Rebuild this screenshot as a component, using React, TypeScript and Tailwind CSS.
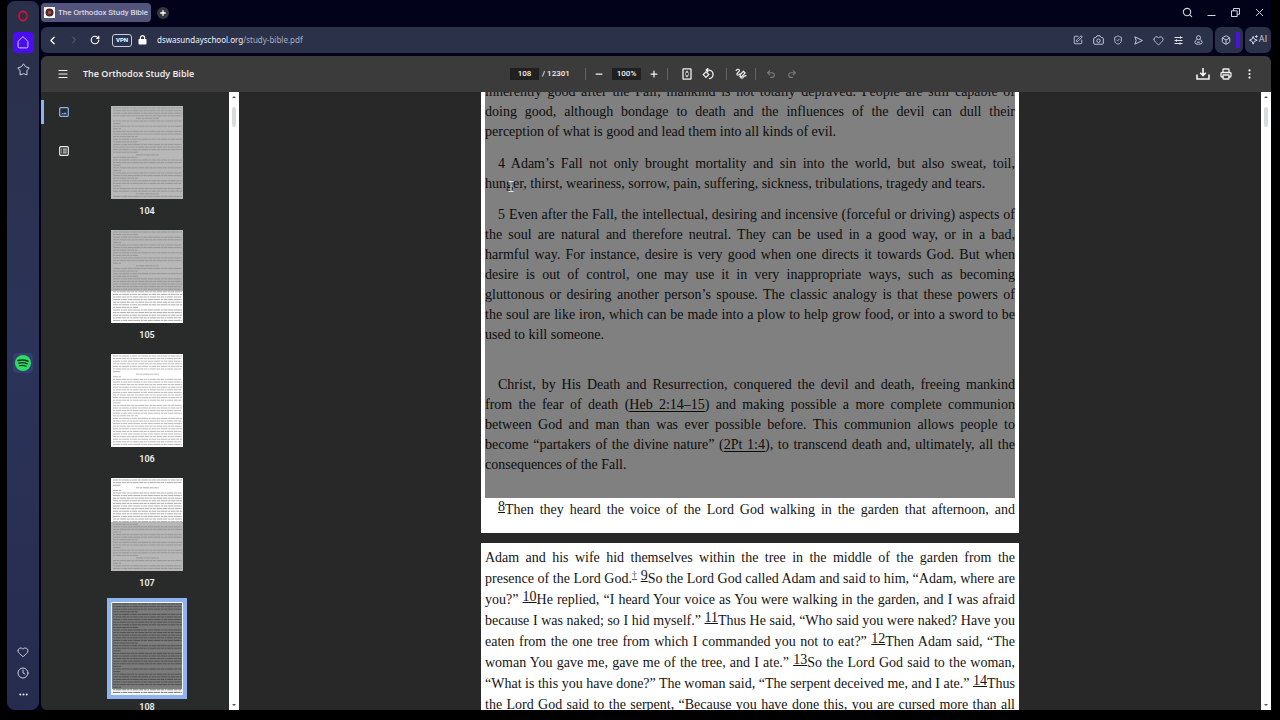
import React from 'react';
import {
  ChevronLeft, ChevronRight, RotateCw, SquarePen, ShieldCheck, Heart,
  Box, Search, X, Menu, Minus, Plus, Undo2, Redo2, Printer, Clock,
} from 'lucide-react';

type Kids = { children: React.ReactNode };

const iconBtn = 'flex h-5 shrink-0 items-center justify-center';

function IconButton({ label, className = 'w-5', children }: Kids & { label: string; className?: string }) {
  return (
    <button type="button" aria-label={label} className={`${iconBtn} ${className}`}>
      {children}
    </button>
  );
}

/* ---------- drawings ---------- */

function OperaLogo() {
  return (
    <svg width="12" height="12" viewBox="0 0 12 12" fill="none">
      <ellipse cx="6" cy="6" rx="4" ry="4.6" stroke="#d81b3c" strokeWidth="1.6" />
      <path d="M3.2 2.6A5.2 5.2 0 0 0 3.2 9.4M8.8 2.6A5.2 5.2 0 0 1 8.8 9.4" stroke="#b5122f" strokeWidth="1.8" />
    </svg>
  );
}

function HomeIcon() {
  return (
    <svg width="12" height="13" viewBox="0 0 12 13" fill="none" stroke="#d9d2ff" strokeWidth="1">
      <path d="M6 .9Q6.5.9 7 1.4L10.4 4.9Q10.9 5.4 10.9 6.1V10.6Q10.9 11.9 9.6 11.9H2.4Q1.1 11.9 1.1 10.6V6.1Q1.1 5.4 1.6 4.9L5 1.4Q5.5.9 6 .9Z" />
    </svg>
  );
}

function StarIcon() {
  return (
    <svg width="13" height="13" viewBox="0 0 13 13" fill="none" stroke="#c9cde0" strokeWidth="1" strokeLinejoin="round">
      <path d="M6.5.8 8.6 3.8 12.2 4.9 9.9 7.8 10 11.9 6.5 10.7 3 11.9 3.1 7.8.8 4.9 4.4 3.8Z" />
    </svg>
  );
}

function SpotifyIcon() {
  return (
    <svg width="16" height="16" viewBox="0 0 16 16" fill="none" strokeLinecap="round">
      <circle cx="8" cy="8" r="8" fill="#2fdc68" />
      <path d="M3 5.5Q8.2 4 13 6.3" stroke="#12301d" strokeWidth="1.5" />
      <path d="M3.7 8.2Q8.2 6.9 12.2 8.9" stroke="#12301d" strokeWidth="1.3" />
      <path d="M4.4 10.7Q8 9.8 11.2 11.3" stroke="#12301d" strokeWidth="1.1" />
    </svg>
  );
}

function RestoreIcon() {
  return (
    <svg width="9" height="9" viewBox="0 0 9 9" fill="none" stroke="#d4d4dc">
      <path d="M.5 2.8H6.2V8.5H.5ZM2.5 2.8V.5H8.5V6.3H6.2" />
    </svg>
  );
}

function LockIcon() {
  return (
    <svg width="9" height="10" viewBox="0 0 9 10" fill="none">
      <rect x=".5" y="4" width="8" height="5.6" rx=".8" fill="#fff" />
      <path d="M2.4 4.4V2.8A2.1 2.1 0 0 1 6.6 2.8V4.4" stroke="#fff" strokeWidth="1.2" />
    </svg>
  );
}

function SnapshotIcon() {
  return (
    <svg width="11" height="10" viewBox="0 0 11 10" fill="none" stroke="#c3c8d9">
      <path d="M1.8 2.6H2.8L4 .8H7L8.2 2.6H9.2Q10.3 2.6 10.3 3.7V8.1Q10.3 9.2 9.2 9.2H1.8Q.7 9.2.7 8.1V3.7Q.7 2.6 1.8 2.6Z" />
      <circle cx="5.5" cy="5.7" r="1.7" />
    </svg>
  );
}

function FlowIcon() {
  return (
    <svg width="9" height="9" viewBox="0 0 9 9" fill="none" stroke="#c3c8d9" strokeLinejoin="round">
      <path d="M.8.8 8.4 4.5.8 8.2 2.2 4.5Z" />
    </svg>
  );
}

function TunerIcon() {
  return (
    <svg width="9" height="9" viewBox="0 0 9 9" fill="none" stroke="#dfe2ec">
      <path d="M.5 1.5H8.5M.5 4.5H8.5M.5 7.5H8.5M6.5.3V2.7M2.5 3.3V5.7M6 6.3V8.7" />
    </svg>
  );
}

function ProfileIcon() {
  return (
    <svg width="9" height="10" viewBox="0 0 9 10" fill="none" stroke="#c3c8d9">
      <circle cx="4.5" cy="2.7" r="2" />
      <path d="M2.8 4.6Q.9 5.6.9 7.6 1 9.3 4.5 9.3 8 9.3 8.1 7.6 8.1 5.6 6.2 4.6" />
      <path d="M3 7.2H6" />
    </svg>
  );
}

function SparkleIcon() {
  return (
    <svg width="9" height="10" viewBox="0 0 9 10" fill="none" stroke="#d4d8e6">
      <path d="M4.2 1.4 5.3 4 8.2 5.2 5.3 6.4 4.2 9.2 3.1 6.4.5 5.2 3.1 4Z" strokeLinejoin="round" />
      <path d="M7.4.2V2.8M6.1 1.5H8.7" />
    </svg>
  );
}

function FitPageIcon() {
  return (
    <svg width="10" height="12" viewBox="0 0 10 12" fill="none" stroke="#f1f1f1">
      <rect x="1" y=".8" width="8" height="10.4" rx=".6" strokeWidth="1.3" />
      <path d="M3.6 4.4 5 2.8 6.4 4.4ZM3.6 7.6 5 9.2 6.4 7.6Z" fill="#f1f1f1" strokeWidth=".4" />
      <path d="M3 6H4M6 6H7" />
    </svg>
  );
}

function RotateIcon() {
  return (
    <svg width="12" height="12" viewBox="0 0 12 12" fill="none" stroke="#f1f1f1" strokeWidth="1.3">
      <path d="M1.2 6.6 4 3.9 6.8 6.6 4 9.4Z" />
      <path d="M4.6 2.1H6.6A4.3 4.3 0 0 1 6.9 10.7M6.2.2 4.2 2.1 6.2 4" />
    </svg>
  );
}

function DrawIcon() {
  return (
    <svg width="12" height="12" viewBox="0 0 12 12" fill="none" stroke="#f1f1f1" strokeWidth="1.2" strokeLinecap="round" strokeLinejoin="round">
      <path d="M1.2 2.4C2.2.8 4.6.9 4.4 2.6 4.2 4 1.6 4.8 1.9 6.4 2.2 7.6 3.8 7 5.2 5.6" />
      <path d="M5 8.6 5.3 6.6 8.4 3.2 10.2 4.9 7 8.3Z" />
      <path d="M5.4 8.6C5.4 10.6 7.6 10.6 8.2 9.2 8.6 8.2 9.6 7.8 11 7.6" />
    </svg>
  );
}

function DownloadIcon() {
  return (
    <svg width="14" height="12" viewBox="0 0 14 12" fill="none" stroke="#f5f5f5" strokeWidth="1.6">
      <path d="M1 6.5V11H13V6.5M7 0V7.4M4.2 4.8 7 7.6 9.8 4.8" />
    </svg>
  );
}

function ThumbnailsIcon() {
  return (
    <svg width="10" height="10" viewBox="0 0 10 10" fill="none" stroke="#8ab4f8" strokeWidth="1.2">
      <rect x=".7" y=".7" width="8.6" height="8.6" rx="1" />
      <path d="M2.2 7.3 3.6 5.7 4.7 6.8 6.2 5.2 7.8 7.3Z" fill="#8ab4f8" stroke="none" />
    </svg>
  );
}

function OutlineIcon() {
  return (
    <svg width="10" height="10" viewBox="0 0 10 10" fill="none" stroke="#ececec" strokeWidth="1.2">
      <rect x=".7" y=".7" width="8.6" height="8.6" rx="1" />
      <path d="M2.2 3.1H3.2M4 3.1H7.8M2.2 5H3.2M4 5H7.8M2.2 6.9H3.2M4 6.9H7.8" strokeWidth="1" />
    </svg>
  );
}

/* ---------- browser chrome ---------- */

function SideRail() {
  return (
    <nav aria-label="Browser sidebar" className="mt-px flex w-8 shrink-0 flex-col items-center rounded-lg bg-linear-to-b from-[#2a3049] via-[#2b3358] to-[#252c4e] pt-1">
      <IconButton label="Opera menu" className="mt-px w-5"><OperaLogo /></IconButton>
      <button type="button" aria-label="Home" className="mt-[6px] flex size-[21px] items-center justify-center rounded-sm bg-[#4a0cf0]">
        <HomeIcon />
      </button>
      <IconButton label="Bookmarks" className="mt-[6px] w-5"><StarIcon /></IconButton>
      <div className="my-auto pt-1">
        <button type="button" aria-label="Spotify" className="flex size-5 items-center justify-center rounded-sm bg-[#333f6e]">
          <SpotifyIcon />
        </button>
      </div>
      <div className="flex flex-col items-center gap-px pb-[6px]">
        <IconButton label="Favourites"><Heart size={12} strokeWidth={2} className="text-[#c9cde0]" /></IconButton>
        <IconButton label="History"><Clock size={12} strokeWidth={2} className="text-[#c9cde0]" /></IconButton>
        <IconButton label="More">
          <svg width="9" height="3" viewBox="0 0 9 3" fill="#e6e8f2">
            <circle cx="1.3" cy="1.5" r="1" /><circle cx="4.5" cy="1.5" r="1" /><circle cx="7.7" cy="1.5" r="1" />
          </svg>
        </IconButton>
      </div>
    </nav>
  );
}

function TabStrip() {
  return (
    <header className="flex h-[27px] items-center pb-[2px]">
      <div className="flex h-[19px] items-center gap-[3px] rounded-sm bg-[#52547c] px-[3px]">
        <svg width="11" height="11" viewBox="0 0 11 11">
          <rect width="11" height="11" fill="#fff" />
          <circle cx="5.5" cy="5.5" r="4" fill="#4a2a30" />
          <circle cx="5.5" cy="5.5" r="1.8" fill="#b0483c" />
        </svg>
        <span className="text-[8px] whitespace-nowrap text-[#f0f0f6]">The Orthodox Study Bible</span>
      </div>
      <button type="button" aria-label="New tab" className="ml-[6px] flex size-3 items-center justify-center rounded-full bg-[#36363f]">
        <Plus size={8} strokeWidth={4} className="text-white" />
      </button>
      <div className="ml-auto flex text-[#d4d4dc]">
        <IconButton label="Search tabs" className="w-6"><Search size={11} strokeWidth={2.4} /></IconButton>
        <IconButton label="Minimize" className="w-6">
          <svg width="9" height="9" viewBox="0 0 9 9"><path d="M.5 7.5H8.5" stroke="#d4d4dc" /></svg>
        </IconButton>
        <IconButton label="Restore" className="w-6"><RestoreIcon /></IconButton>
        <IconButton label="Close" className="w-6"><X size={13} strokeWidth={1.8} /></IconButton>
      </div>
    </header>
  );
}

function AddressBar() {
  return (
    <div className="flex h-[26px] gap-[2px] text-[#c3c8d9]">
      <div className="flex min-w-0 flex-1 items-center rounded-md bg-[#2a3148] pr-[5px] pl-px">
        <IconButton label="Back" className="w-[21px]"><ChevronLeft size={13} strokeWidth={2.4} className="text-white" /></IconButton>
        <IconButton label="Forward" className="w-[21px]"><ChevronRight size={12} strokeWidth={2} className="text-[#666c84]" /></IconButton>
        <IconButton label="Reload" className="w-[22px]"><RotateCw size={10} strokeWidth={2.8} className="text-white" /></IconButton>
        <button type="button" className="ml-[6px] flex h-[13px] w-5 items-center justify-center rounded-[3px] border border-[#c6cadb] text-[6px] leading-none font-bold text-white">VPN</button>
        <IconButton label="Site information"><LockIcon /></IconButton>
        <a href="#study-bible" className="ml-[5px] font-['Noto_Sans',sans-serif] text-[8px] whitespace-nowrap text-[#a9afc4]">
          <span className="text-[#f0f2f8]">dswasundayschool.org</span>/study-bible.pdf
        </a>
        <div className="ml-auto flex">
          <IconButton label="Edit page"><SquarePen size={10} strokeWidth={2.2} /></IconButton>
          <IconButton label="Snapshot"><SnapshotIcon /></IconButton>
          <IconButton label="Blocker"><ShieldCheck size={10} strokeWidth={2.2} /></IconButton>
          <IconButton label="Send"><FlowIcon /></IconButton>
          <IconButton label="Add to favourites"><Heart size={11} strokeWidth={2} /></IconButton>
          <IconButton label="Easy setup"><TunerIcon /></IconButton>
          <IconButton label="Profile"><ProfileIcon /></IconButton>
        </div>
      </div>
      <div className="flex w-7 items-center justify-between rounded-md bg-[#2a3148] pr-[3px] pl-px">
        <IconButton label="Extensions"><Box size={10} strokeWidth={2.4} /></IconButton>
        <span className="h-4 w-1 rounded-[1px] bg-[#4a12e0]" />
      </div>
      <button type="button" className="flex w-[26px] items-center justify-center gap-px rounded-md bg-[#2a3148] text-[9px]">
        <SparkleIcon />AI
      </button>
    </div>
  );
}

/* ---------- PDF viewer ---------- */

function Divider({ className = '' }: { className?: string }) {
  return <span className={`h-3 w-px bg-[#636363] ${className}`} />;
}

function PdfToolbar() {
  return (
    <div className="mt-[3px] grid h-9 shrink-0 grid-cols-[1fr_auto_1fr] items-center rounded-t-md bg-[#3b3b3b] text-[#f1f1f1]">
      <div className="flex items-center gap-[10px] pl-3">
        <IconButton label="Menu"><Menu size={12} strokeWidth={2.4} /></IconButton>
        <h1 className="font-['Open_Sans',sans-serif] text-[9px] font-semibold whitespace-nowrap">The Orthodox Study Bible</h1>
      </div>
      <div className="flex items-center text-[8px] font-medium">
        <input aria-label="Page number" defaultValue="108" className="h-3 w-[29px] bg-[#202020] text-center" />
        <span className="ml-[3px] w-[30px] whitespace-nowrap">/ 12301</span>
        <Divider className="ml-[13px]" />
        <IconButton label="Zoom out" className="w-[26px]"><Minus size={10} strokeWidth={3} /></IconButton>
        <input aria-label="Zoom" defaultValue="100%" className="h-3 w-[29px] bg-[#202020] text-center" />
        <IconButton label="Zoom in" className="w-[26px]"><Plus size={10} strokeWidth={3} /></IconButton>
        <Divider />
        <IconButton label="Fit to page" className="ml-2 w-[21px]"><FitPageIcon /></IconButton>
        <IconButton label="Rotate" className="w-[21px]"><RotateIcon /></IconButton>
        <Divider className="ml-2" />
        <IconButton label="Draw" className="w-7"><DrawIcon /></IconButton>
        <Divider />
        <IconButton label="Undo" className="ml-1 w-[21px]"><Undo2 size={10} strokeWidth={2.6} className="text-[#7b7b7b]" /></IconButton>
        <IconButton label="Redo" className="w-[21px]"><Redo2 size={10} strokeWidth={2.6} className="text-[#7b7b7b]" /></IconButton>
      </div>
      <div className="flex justify-end gap-[3px] pr-3">
        <IconButton label="Download"><DownloadIcon /></IconButton>
        <IconButton label="Print"><Printer size={12} strokeWidth={2.6} /></IconButton>
        <IconButton label="More actions">
          <svg width="3" height="10" viewBox="0 0 3 10" fill="#f1f1f1">
            <circle cx="1.5" cy="1.4" r="1.1" /><circle cx="1.5" cy="5" r="1.1" /><circle cx="1.5" cy="8.6" r="1.1" />
          </svg>
        </IconButton>
      </div>
    </div>
  );
}

type Thumb = { page: number; top: string; bottom: string; split: number; ink: string; breaks: number[]; heads: number[]; current?: boolean };

const thumbs: Thumb[] = [
  { page: 104, top: '#b8b8b8', bottom: '#b8b8b8', split: 93, ink: '#868686', breaks: [17, 24, 31, 37, 45, 52, 58, 65, 73, 80], heads: [13, 48, 87] },
  { page: 105, top: '#b8b8b8', bottom: '#ffffff', split: 61, ink: '#868686', breaks: [5, 12, 19, 26, 33, 41, 47, 78], heads: [37] },
  { page: 106, top: '#ffffff', bottom: '#ffffff', split: 93, ink: '#9a9a9a', breaks: [18, 24, 50, 63], heads: [21] },
  { page: 107, top: '#ffffff', bottom: '#b8b8b8', split: 44, ink: '#868686', breaks: [6, 13, 47, 55, 62, 69, 77, 84], heads: [9, 45, 81] },
  { page: 108, top: '#7c7c7c', bottom: '#ffffff', split: 87, ink: '#3c3c3c', breaks: [11, 25, 41, 49, 65, 70, 85], heads: [], current: true },
];

const dashes = ['5 .6 3 .5 7 .6 2 .5', '2 .5 6 .6 4 .5 3 .6', '7 .6 2 .5 4 .6 5 .5', '3 .5 3 .6 6 .5 4 .6'];

function PageThumb({ thumb }: { thumb: Thumb }) {
  const rows: React.ReactNode[] = [];
  for (let i = 0; i * 2.6 + 2 < 91; i++) {
    const y = i * 2.6 + 2;
    const dash = dashes[i % 4];
    if (thumb.breaks.some((b) => Math.abs(b - y) <= 1.3)) {
      rows.push(<path key={i} d={`M2 ${y}H${10 + ((i * 17) % 34)}`} strokeDasharray={dash} />);
    } else if (thumb.heads.some((h) => Math.abs(h - y) <= 1.3)) {
      rows.push(<path key={i} d={`M25 ${y}H48`} strokeDasharray={dash} />);
    } else {
      rows.push(<path key={i} d={`M2 ${y}H71`} strokeDasharray={dash} />);
    }
  }
  return (
    <a href={`#page-${thumb.page}`} className="flex flex-col items-center">
      <svg width="72" height="93" viewBox="0 0 72 93" fill="none" stroke={thumb.ink} strokeWidth=".7"
        className={thumb.current ? 'ring-4 ring-[#8fb3ee]' : ''}>
        <rect width="72" height="93" fill={thumb.bottom} stroke="none" />
        <rect width="72" height={thumb.split} fill={thumb.top} stroke="none" />
        {rows}
        {thumb.current && <path d="M.5.5H71.5V92.5H.5Z" stroke="#f4f4f4" strokeWidth="1" />}
      </svg>
      <span className="mt-1 h-[27px] text-[9px] leading-4 font-semibold text-[#efefef]">{thumb.page}</span>
    </a>
  );
}

function Scrollbar() {
  return (
    <div aria-hidden="true" className="flex w-[10px] shrink-0 flex-col items-center bg-white py-1">
      <svg viewBox="0 0 4 2" className="h-[2px] w-1" fill="#555"><path d="M0 2 2 0 4 2Z" /></svg>
      <span className="mt-[9px] h-5 w-1 rounded-full bg-[#d9dcde]" />
      <svg viewBox="0 0 4 2" className="mt-auto h-[2px] w-1" fill="#555"><path d="M0 0 2 2 4 0Z" /></svg>
    </div>
  );
}

function ThumbnailPane() {
  return (
    <aside className="flex w-[198px] shrink-0 bg-[#292b2a]">
      <div className="flex w-[45px] flex-col pt-2">
        <div className="flex h-6 items-center border-l-[3px] border-[#8ab4f8]">
          <IconButton label="Thumbnails" className="ml-[10px] w-5"><ThumbnailsIcon /></IconButton>
        </div>
        <IconButton label="Document outline" className="mt-[17px] ml-[13px] w-5"><OutlineIcon /></IconButton>
      </div>
      <div className="flex flex-1 flex-col items-center overflow-hidden pt-[14px] pr-[21px]">
        {thumbs.map((t) => <PageThumb key={t.page} thumb={t} />)}
      </div>
      <Scrollbar />
    </aside>
  );
}

/* One typeset line of the book; full lines are justified to both margins. */
function Line({ children, indent, last }: Kids & { indent?: boolean; last?: boolean }) {
  return (
    <span className={`block whitespace-nowrap ${indent ? 'pl-[13px]' : ''} ${last ? '' : '[text-align-last:justify]'}`}>
      {children}
    </span>
  );
}

function Verse({ n }: { n: string }) {
  return <a href={`#verse-${n}`} className="align-[3px] leading-none underline underline-offset-1">{n}</a>;
}

function Ref({ children }: Kids) {
  return <a href="#reference" className="underline underline-offset-2">{children}</a>;
}

function Document() {
  return (
    <main className="min-w-0 flex-1 overflow-hidden bg-[#282828] font-['Liberation_Serif',serif] text-[14px] leading-5 text-[#141414]">
      <article className="relative mx-auto w-[538px] bg-white px-1 pb-[13px]">
        <div className="-mt-[10px] bg-[#808080] pb-[23px] text-[#0c0c0c]">
          <p>
            <Line>inherently good after the Fall; mankind is not totally depraved. People are still capable of</Line>
            <Line>doing good, although bondage to death and the influences of the devil can dull their</Line>
            <Line last>perception of what is good and lead them into all kinds of evil.</Line>
          </p>
          <p className="mt-3">
            <Line indent>4 Adam’s Fall not only brought mortality and sin into the world, but also sweat, toil,</Line>
            <Line last>hunger, thirst, weariness, sorrow, pain, suffering, sickness, tribulations, tragedy and tears.</Line>
          </p>
          <p className="mt-[11px]">
            <Line indent>5 Even after the Fall, the intellectual, desiring and incensive (forceful or driving) aspects of</Line>
            <Line>the soul are natural and therefore neutral. They can be used in a good way, or in a bad,</Line>
            <Line>harmful way. For instance, desire is very good when one directs it towards God. But when</Line>
            <Line>desire is out of control, one may use it in very inappropriate ways, such as becoming</Line>
            <Line>gluttonous or desiring another person’s spouse. The classic analogy is that these powers of</Line>
            <Line>the soul are like iron, which can be made into a plow to help grow food, or into a sword to be</Line>
            <Line last>used to kill someone.</Line>
          </p>
          <p className="mt-[30px]">
            <Line indent>Christ, by His Death and Resurrection, conquered the devil and death, freeing mankind</Line>
            <Line>from the fear of death (<Ref>Heb 2:14–15</Ref>) and making possible a more complete communion</Line>
            <Line>between God and man than was ever possible before. This communion allows people to</Line>
            <Line>become “partakers of the divine nature” (<Ref>2Pt 1:4</Ref>), to transcend death and, ultimately, all the</Line>
            <Line last>consequences of the Fall.</Line>
          </p>
        </div>
        <p className="pt-[2px]">
          <Line indent><Verse n="8" />Then they heard the voice of the Lord God walking in the garden that afternoon, and</Line>
        </p>
        <svg width="6" height="11" viewBox="0 0 6 11" fill="none" stroke="#e8e8e8" className="absolute top-[99px] left-[27px]">
          <path d="M.5.5H5.5M3 .5V10.5M.5 10.5H5.5" />
        </svg>
      </article>
      <article className="mx-auto mt-[10px] w-[538px] bg-white px-1 pt-1">
        <p className="leading-[21px]">
          <Line>Adam and his wife hid themselves within the tree in the middle of the garden from the</Line>
          <Line>presence of the Lord God.<a href="#note" className="align-[5px] text-[10px] leading-none text-[#555] underline">†</a> <Verse n="9" />So the Lord God called Adam and said to him, “Adam, where are</Line>
          <Line>you?” <Verse n="10" />He replied, “I heard Your voice as You were walking in the garden, and I was afraid</Line>
          <Line>because I was naked; so I hid myself.” <Verse n="11" />Thus He said, “Who said you were naked? Have you</Line>
          <Line>eaten from the one tree from which I commanded you not to eat?” <Verse n="12" />Then Adam said, “The</Line>
          <Line>woman You gave me, gave me of the tree, and I ate.” <Verse n="13" />So the Lord God said to the woman,</Line>
          <Line>“What is this you have done?” The woman said, “The serpent deceived me, and I ate.” <Verse n="14" />Thus</Line>
          <Line>the Lord God said to the serpent, “Because you have done this, you are cursed more than all</Line>
        </p>
      </article>
    </main>
  );
}

export default function App() {
  return (
    <div className="h-screen overflow-hidden bg-black pr-[9px] pb-[10px] pl-[7px] font-['Roboto',sans-serif]">
      <div className="flex h-full gap-[2px] bg-[#02031a]">
        <SideRail />
        <div className="flex min-w-0 flex-1 flex-col">
          <TabStrip />
          <AddressBar />
          <PdfToolbar />
          <div className="flex min-h-0 flex-1 overflow-hidden rounded-bl-md">
            <ThumbnailPane />
            <Document />
            <Scrollbar />
          </div>
        </div>
      </div>
    </div>
  );
}
